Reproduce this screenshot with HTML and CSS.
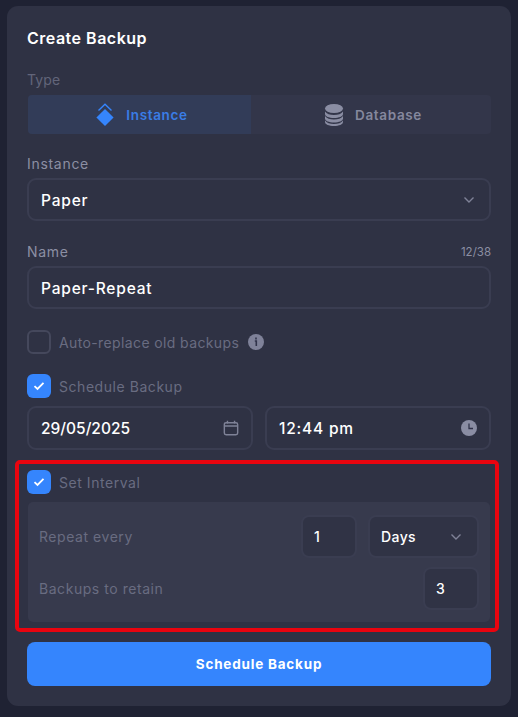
FILE: index.html
```html
<!DOCTYPE html>
<html lang="en">
<head>
<meta charset="utf-8">
<title>Create Backup</title>
<link rel="stylesheet" href="styles.css">
</head>
<body>
<main class="card">
  <h1 class="title">Create Backup</h1>

  <div class="label label-dim type-label">Type</div>
  <div class="segment">
    <div class="seg seg-active">
      <svg class="seg-icon" viewBox="0 0 20 24" width="20" height="24"><path d="M10 6 18.600 14.500 10 23 1.400 14.500Z" fill="#3585fd"/><path d="M3.500 7.500 10 1.200 16.500 7.500" fill="none" stroke="#3585fd" stroke-width="1.400"/></svg>
      <span>Instance</span>
    </div>
    <div class="seg">
      <svg class="seg-icon" viewBox="0 0 20 24" width="20" height="24"><g fill="#8a8da3"><ellipse cx="10" cy="5.500" rx="9" ry="4.500"/><path d="M1 8.500c1.500 2.400 5 3.500 9 3.500s7.500-1.100 9-3.500V11c0 2.400-4 4-9 4s-9-1.600-9-4Z"/><path d="M1 13c1.500 2.400 5 3.500 9 3.500s7.500-1.100 9-3.500v2.500c0 2.400-4 4-9 4s-9-1.600-9-4Z"/><path d="M1 17.500c1.500 2.400 5 3.500 9 3.500s7.500-1.100 9-3.500V19c0 2.400-4 4-9 4s-9-1.600-9-4Z"/></g></svg>
      <span>Database</span>
    </div>
  </div>

  <div class="label field-label">Instance</div>
  <div class="field">
    <span>Paper</span>
    <svg class="chev" viewBox="0 0 12 8" width="12" height="8"><path d="M1.500 1.500 6 6l4.500-4.500" fill="none" stroke="#7f8297" stroke-width="1.400"/></svg>
  </div>

  <div class="label-row">
    <span class="label">Name</span>
    <span class="counter">12/38</span>
  </div>
  <div class="field"><span>Paper-Repeat</span></div>

  <div class="check-row check-auto">
    <span class="box"></span>
    <span class="check-text auto-text">Auto-replace old backups</span>
    <svg class="info" viewBox="0 0 16 16" width="16" height="16"><circle cx="8" cy="8" r="8" fill="#7f8299"/><path d="M8 3.600v1.800M6.800 7h1.500v5" fill="none" stroke="#30334a" stroke-width="1.600"/></svg>
  </div>

  <div class="check-row check-schedule">
    <span class="box box-on"><svg viewBox="0 0 12 10" width="12" height="10"><path d="M1.500 5.200 4.500 8l6-6.200" fill="none" stroke="#fff" stroke-width="1.800"/></svg></span>
    <span class="check-text">Schedule Backup</span>
  </div>

  <div class="datetime">
    <div class="field">
      <span class="date-text">29/05/2025</span>
      <svg viewBox="0 0 18 18" width="16" height="16"><rect x="1.500" y="3" width="15" height="13.500" rx="2" fill="none" stroke="#7f8297" stroke-width="1.600"/><path d="M1.500 6.800h15M5 .8v3M13 .8v3" fill="none" stroke="#7f8297" stroke-width="1.600"/></svg>
    </div>
    <div class="field">
      <span>12:44 pm</span>
      <svg viewBox="0 0 16 16" width="16" height="16"><circle cx="8" cy="8" r="8" fill="#8a8da3"/><path d="M8 3.500V8.500h4" fill="none" stroke="#30334a" stroke-width="1.300"/></svg>
    </div>
  </div>

  <section class="interval">
    <div class="check-row">
      <span class="box box-on"><svg viewBox="0 0 12 10" width="12" height="10"><path d="M1.500 5.200 4.500 8l6-6.200" fill="none" stroke="#fff" stroke-width="1.800"/></svg></span>
      <span class="check-text">Set Interval</span>
    </div>
    <div class="panel">
      <div class="panel-row">
        <span class="panel-label">Repeat every</span>
        <div class="mini mini-num">1</div>
        <div class="mini mini-select">
          <span>Days</span>
          <svg viewBox="0 0 12 8" width="12" height="8"><path d="M1.500 1.500 6 6l4.500-4.500" fill="none" stroke="#7f8297" stroke-width="1.400"/></svg>
        </div>
      </div>
      <div class="panel-row">
        <span class="panel-label">Backups to retain</span>
        <div class="mini mini-num">3</div>
      </div>
    </div>
  </section>

  <button class="submit" type="button">Schedule Backup</button>
</main>
</body>
</html>
```

FILE: styles.css
```css
* { box-sizing: border-box; }
html, body { margin: 0; height: 100%; }
body {
  background: #1f2233;
  font-family: "Inter", "Open Sans", sans-serif;
  color: #fff;
  padding: 6px 7px 0;
  overflow: hidden;
}
.card {
  background: #2f3244;
  border-radius: 11px;
  height: 700px;
  padding: 22px 20px 0;
}
.title {
  margin: 0;
  font-size: 16px;
  font-weight: 600;
  line-height: 20px;
  letter-spacing: .5px;
}
.label {
  font-size: 14px;
  line-height: 16px;
  letter-spacing: .7px;
  color: #8c8fa3;
}
.label-dim { color: #62657a; letter-spacing: .1px; }
.type-label { margin-top: 24px; }
.segment {
  display: flex;
  margin: 7px 0 0 1px;
  height: 39px;
  background: #33364a;
  border-radius: 4px;
  overflow: hidden;
}
.seg {
  flex: 1;
  display: flex;
  align-items: center;
  justify-content: center;
  gap: 11px;
  padding-left: 4px;
  font-size: 13.500px;
  font-weight: 600;
  letter-spacing: .65px;
  color: #85889e;
}
.seg-active {
  flex: 0 0 223px;
  background: #323c58;
  color: #3a7de6;
}
.seg-icon { flex: none; }
.field-label { margin-top: 22px; }
.field {
  display: flex;
  align-items: center;
  justify-content: space-between;
  height: 43px;
  margin-top: 6px;
  padding: 1px 14px 0 12px;
  border: 2px solid #3a3d51;
  border-radius: 9px;
  font-size: 15.500px;
  font-weight: 500;
  letter-spacing: .8px;
}
.date-text { letter-spacing: 0; }
.label-row {
  display: flex;
  justify-content: space-between;
  align-items: center;
  margin-top: 23px;
  height: 16px;
}
.counter { font-size: 11.500px; color: #8c8fa3; }
.check-row {
  display: flex;
  align-items: center;
  gap: 8px;
  height: 24px;
}
.check-auto { margin-top: 21px; }
.check-schedule { margin-top: 20px; }
.box {
  flex: none;
  display: flex;
  align-items: center;
  justify-content: center;
  width: 24px;
  height: 24px;
  border: 2px solid #45485c;
  border-radius: 6px;
}
.box-on { background: #3585fd; border: 0; }
.check-text { font-size: 14px; letter-spacing: .55px; color: #696c81; }
.auto-text { letter-spacing: .38px; }
.info { margin-left: 1px; }
.datetime {
  display: grid;
  grid-template-columns: 1fr 1fr;
  gap: 12px;
  margin-top: 8px;
}
.datetime .field { margin-top: 0; height: 44px; padding: 0 12px; }
.interval {
  margin: 10px -8px 0 -12px;
  height: 172px;
  padding: 6px 4px 0 8px;
  border: 4px solid #e9040f;
  border-radius: 5px;
}
.panel {
  margin: 8px 1px 0;
  height: 120px;
  padding: 13px 11px 0;
  background: #373a4d;
  border-radius: 5px;
  display: flex;
  flex-direction: column;
  gap: 9px;
}
.panel-row {
  display: flex;
  align-items: center;
  gap: 11px;
  height: 43px;
}
.panel-label {
  flex: 1;
  font-size: 14px;
  letter-spacing: .55px;
  color: #696c81;
}
.mini {
  display: flex;
  align-items: center;
  height: 43px;
  padding: 0 11px;
  background: #303345;
  border: 2px solid #3a3d51;
  border-radius: 8px;
  font-size: 14px;
  font-weight: 500;
  letter-spacing: .4px;
}
.mini-num { width: 56px; }
.mini-select {
  width: 111px;
  justify-content: space-between;
  padding: 0 15px 0 11px;
}
.submit {
  display: block;
  width: 100%;
  height: 44px;
  margin-top: 10px;
  border: 0;
  border-radius: 8px;
  background: #3585fd;
  color: #fff;
  font-family: inherit;
  font-size: 13.500px;
  font-weight: 700;
  letter-spacing: .8px;
}
```
